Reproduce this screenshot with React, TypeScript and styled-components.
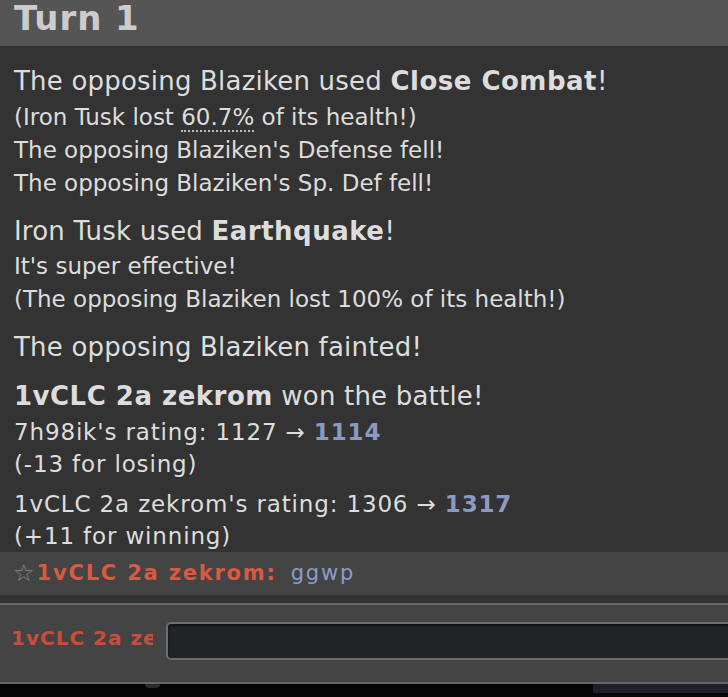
import React from "react";
import styled, { createGlobalStyle } from "styled-components";

const Global = createGlobalStyle`
  html, body { margin: 0; padding: 0; background: #050505; overflow: hidden; }
  body { font-family: "DejaVu Sans", Verdana, sans-serif; }
`;

const Page = styled.div`
  width: 728px;
  height: 697px;
  display: flex;
  flex-direction: column;
  background: #333;
  overflow: hidden;
`;

const TurnHeader = styled.h2`
  margin: 0;
  height: 46px;
  flex: none;
  box-sizing: border-box;
  padding: 0 14px;
  background: #555;
  color: #ccc;
  font-size: 34px;
  line-height: 36px;
  font-weight: bold;
  letter-spacing: 0.9px;
`;

const Log = styled.div`
  padding: 18px 14px 0;
  color: #ddd;
  display: flex;
  flex-direction: column;
`;

const Big = styled.div<{ $gap?: number }>`
  font-size: 26px;
  line-height: 34px;
  letter-spacing: 0.2px;
  margin-top: ${(p) => p.$gap ?? 0}px;
  white-space: nowrap;

  strong {
    letter-spacing: 0.5px;
  }
`;

const Small = styled.div<{ $gap?: number }>`
  font-size: 23px;
  line-height: 33px;
  letter-spacing: 0;
  margin-top: ${(p) => p.$gap ?? 0}px;
  white-space: nowrap;
`;

const Rating = styled.div<{ $gap?: number }>`
  font-size: 23px;
  line-height: 32px;
  letter-spacing: 0.85px;
  margin-top: ${(p) => p.$gap ?? 0}px;
  white-space: nowrap;
`;

const Abbr = styled.abbr`
  text-decoration: none;
  border-bottom: 2px dotted #bbb;
`;

const NewRating = styled.strong`
  color: #8a9ac0;
`;

const ChatRow = styled.div`
  height: 43px;
  flex: none;
  background: #444;
  display: flex;
  align-items: flex-start;
  padding: 0 13px;
  font-size: 21px;
  line-height: 43px;
  letter-spacing: 1.8px;
  white-space: nowrap;
`;

const Star = styled.span`
  color: #888;
  font-size: 24px;
  letter-spacing: 0;
  margin-right: 2px;
`;

const ChatName = styled.strong`
  color: #dc5840;
  margin-right: 14px;
`;

const ChatMsg = styled.span`
  color: #8d9cc6;
`;

const Spacer = styled.div`
  height: 8px;
  flex: none;
  background: #333;
`;

const InputBar = styled.div`
  height: 81px;
  flex: none;
  box-sizing: border-box;
  background: #444;
  border-top: 2px solid #666;
  border-bottom: 2px solid #666;
  display: flex;
  align-items: flex-start;
  padding: 17px 0 0 11px;
  gap: 13px;
`;

const InputLabel = styled.div`
  width: 142px;
  flex: none;
  overflow: hidden;
  white-space: nowrap;
  color: #c94d38;
  font-weight: bold;
  font-size: 20px;
  line-height: 32px;
  letter-spacing: 1px;
`;

const TextBox = styled.div`
  flex: 1;
  height: 38px;
  margin-right: -10px;
  box-sizing: border-box;
  background: #232426;
  border: 2px solid #6a6d73;
  border-radius: 5px;
  box-shadow: inset 0 2px 3px rgba(0, 0, 0, 0.6);
`;

const Footer = styled.div`
  flex: 1;
  display: flex;
  align-items: flex-start;
  background: #050505;
`;

const Knob = styled.div`
  margin-left: 145px;
  width: 15px;
  height: 4px;
  border-radius: 0 0 8px 8px;
  background: #2b2b2b;
`;

const FooterRight = styled.div`
  margin-left: auto;
  width: 135px;
  height: 9px;
  background: #1f1e29;
`;

export default function App() {
  return (
    <>
      <Global />
      <Page>
        <TurnHeader>Turn 1</TurnHeader>
        <Log>
          <Big>
            The opposing Blaziken used <strong>Close Combat</strong>!
          </Big>
          <Small $gap={3}>
            (Iron Tusk lost <Abbr>60.7%</Abbr> of its health!)
          </Small>
          <Small>The opposing Blaziken's Defense fell!</Small>
          <Small>The opposing Blaziken's Sp. Def fell!</Small>
          <Big $gap={14}>
            Iron Tusk used <strong>Earthquake</strong>!
          </Big>
          <Small $gap={2}>It's super effective!</Small>
          <Small>(The opposing Blaziken lost 100% of its health!)</Small>
          <Big $gap={14}>The opposing Blaziken fainted!</Big>
          <Big $gap={15}>
            <strong>1vCLC 2a zekrom</strong> won the battle!
          </Big>
          <Rating $gap={3}>
            7h98ik's rating: 1127 → <NewRating>1114</NewRating>
            <br />
            (-13 for losing)
          </Rating>
          <Rating $gap={8}>
            1vCLC 2a zekrom's rating: 1306 → <NewRating>1317</NewRating>
            <br />
            (+11 for winning)
          </Rating>
        </Log>
        <ChatRow>
          <Star>☆</Star>
          <ChatName>1vCLC 2a zekrom:</ChatName>
          <ChatMsg>ggwp</ChatMsg>
        </ChatRow>
        <Spacer />
        <InputBar>
          <InputLabel>1vCLC 2a zekrom</InputLabel>
          <TextBox />
        </InputBar>
        <Footer>
          <Knob />
          <FooterRight />
        </Footer>
      </Page>
    </>
  );
}
